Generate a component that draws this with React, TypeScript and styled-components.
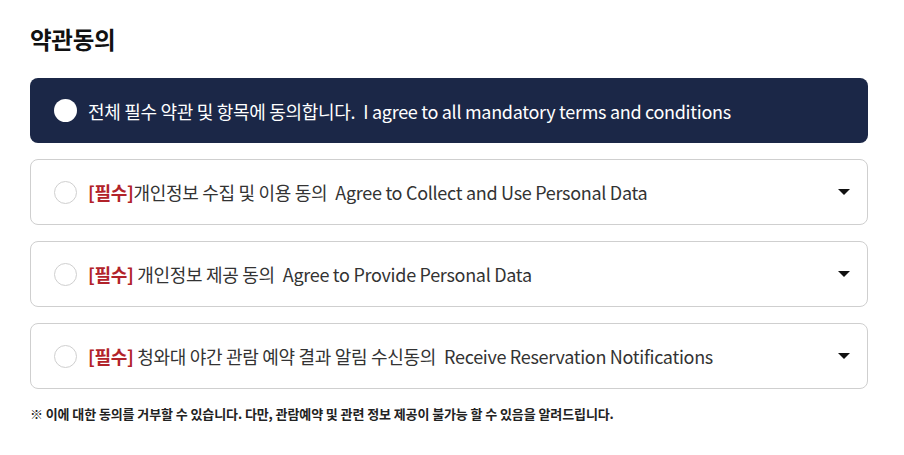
import React from "react";
import styled, { createGlobalStyle } from "styled-components";

const GlobalStyle = createGlobalStyle`
  body {
    margin: 0;
    background: #fff;
    font-family: "Noto Sans CJK KR", "Noto Sans", sans-serif;
    color: #222;
  }
`;

const Wrapper = styled.div`
  width: 838px;
  padding: 21px 30px 0 30px;
`;

const Title = styled.h2`
  margin: 0 0 20px 0;
  font-size: 23.5px;
  font-weight: 700;
  line-height: 37px;
  color: #111;
  letter-spacing: -0.3px;
`;

const List = styled.div`
  display: flex;
  flex-direction: column;
  gap: 16px;
`;

const AllBox = styled.div`
  display: flex;
  align-items: center;
  height: 65px;
  padding: 0 24px;
  box-sizing: border-box;
  background: #1b2747;
  border-radius: 8px;
  color: #fff;
  font-size: 18px;
`;

const Item = styled.div`
  display: flex;
  align-items: center;
  height: 66px;
  padding: 0 17px 0 23px;
  box-sizing: border-box;
  border: 1px solid #cfcfcf;
  border-radius: 8px;
  font-size: 18px;
  color: #333;
`;

const Circle = styled.span<{ $filled?: boolean }>`
  flex: none;
  width: 23px;
  height: 23px;
  border-radius: 50%;
  box-sizing: border-box;
  margin-right: 11px;
  background: #fff;
  border: ${(p) => (p.$filled ? "none" : "1px solid #cfcfcf")};
`;

const Label = styled.span`
  flex: 1;
  white-space: nowrap;
  letter-spacing: -0.3px;
`;

const Required = styled.strong`
  color: #b2232a;
  font-weight: 700;
`;

const Eng = styled.span`
  margin-left: 8px;
`;

const Caret = styled.span`
  flex: none;
  width: 0;
  height: 0;
  border-left: 6px solid transparent;
  border-right: 6px solid transparent;
  border-top: 6px solid #111;
`;

const Note = styled.p`
  margin: 15px 0 0 0;
  font-size: 13px;
  font-weight: 700;
  color: #222;
  letter-spacing: -0.1px;
`;

const items = [
  { ko: "개인정보 수집 및 이용 동의", en: "Agree to Collect and Use Personal Data", space: false },
  { ko: "개인정보 제공 동의", en: "Agree to Provide Personal Data", space: true },
  { ko: "청와대 야간 관람 예약 결과 알림 수신동의", en: "Receive Reservation Notifications", space: true },
];

export default function App() {
  return (
    <>
      <GlobalStyle />
      <Wrapper>
        <Title>약관동의</Title>
        <List>
          <AllBox>
            <Circle $filled />
            <Label>
              전체 필수 약관 및 항목에 동의합니다.<Eng>I agree to all mandatory terms and conditions</Eng>
            </Label>
          </AllBox>
          {items.map((it) => (
            <Item key={it.en}>
              <Circle />
              <Label>
                <Required>[필수]</Required>
                {it.space ? " " : ""}
                {it.ko}
                <Eng>{it.en}</Eng>
              </Label>
              <Caret />
            </Item>
          ))}
        </List>
        <Note>※ 이에 대한 동의를 거부할 수 있습니다. 다만, 관람예약 및 관련 정보 제공이 불가능 할 수 있음을 알려드립니다.</Note>
      </Wrapper>
    </>
  );
}
